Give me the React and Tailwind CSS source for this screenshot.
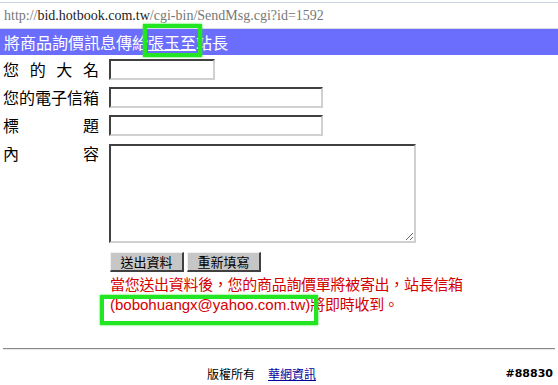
export default function App() {
  const cjk = "font-['Noto_Sans_CJK_TC','Noto_Sans_CJK_SC',sans-serif]";
  const inputCls =
    "block h-[21px] border-2 border-t-[#404040] border-l-[#404040] border-b-[#d0d0d0] border-r-[#d0d0d0] bg-white outline-none";
  const btnCls =
    "h-[20px] w-[74px] bg-[#c6c6c6] border-t border-l border-t-[#f0f0f0] border-l-[#f0f0f0] border-b-2 border-r-2 border-b-[#404040] border-r-[#404040] text-[13px] leading-[16px] text-black " +
    cjk;
  return (
    <div className={"relative w-[558px] h-[385px] bg-white overflow-hidden " + cjk}>
      {/* address bar */}
      <div className="pt-[2px]">
        <div className="h-[27px] border-t border-b border-t-[#c9d4e2] border-b-[#d6dde6] pl-[4px] font-['Liberation_Serif',serif] text-[14px] leading-[25px] text-[#777]">
          http://<span className="text-[#222]">bid.hotbook.com.tw</span>/cgi-bin/SendMsg.cgi?id=1592
        </div>
      </div>
      {/* title band */}
      <div className="h-[26px] bg-[#6b6efc] pl-[4px] text-[16px] leading-[26px] text-white">
        將商品詢價訊息傳給<span className="underline">張玉至</span>站長
      </div>

      {/* form */}
      <div className="mt-[4px] flex flex-col">
        <div className="flex items-center h-[21px]">
          <div className="ml-[3px] w-[97px] flex justify-between text-[16px] leading-[21px] text-black pr-[1px]">
            <span>您</span><span>的</span><span>大</span><span>名</span>
          </div>
          <input className={inputCls + " ml-[9px] w-[106px]"} />
        </div>
        <div className="flex items-center h-[21px] mt-[7px]">
          <div className="ml-[3px] w-[97px] text-[16px] leading-[21px] text-black">您的電子信箱</div>
          <input className={inputCls + " ml-[9px] w-[214px]"} />
        </div>
        <div className="flex items-center h-[21px] mt-[7px]">
          <div className="ml-[3px] w-[97px] flex justify-between text-[16px] leading-[21px] text-black pr-[1px]">
            <span>標</span><span>題</span>
          </div>
          <input className={inputCls + " ml-[9px] w-[214px]"} />
        </div>
        <div className="flex items-start mt-[8px]">
          <div className="ml-[3px] w-[97px] flex justify-between text-[16px] leading-[18px] text-black pr-[1px]">
            <span>內</span><span>容</span>
          </div>
          <textarea className="block ml-[9px] w-[307px] h-[99px] border-2 border-t-[#404040] border-l-[#404040] border-b-[#d0d0d0] border-r-[#d0d0d0] bg-white outline-none" />
        </div>

        <div className="ml-[110px] mt-[9px] flex gap-[3px]">
          <button className={btnCls}>送出資料</button>
          <button className={btnCls}>重新填寫</button>
        </div>

        <div className="ml-[110px] mt-[2px] text-[15px] leading-[20px] tracking-[-0.3px] text-[#d40000]">
          當您送出資料後，您的商品詢價單將被寄出，站長信箱
          <br />
          <span className="font-['Liberation_Sans',sans-serif] tracking-normal">(bobohuangx@yahoo.com.tw)</span>將即時收到。
        </div>
      </div>

      {/* footer */}
      <div className="mx-[3px] mt-[33px] border-t border-b border-t-[#8a8a8a] border-b-[#e8e8e8]" />
      <div className="mt-[16px] flex items-center h-[16px] text-[12px] leading-[16px]">
        <span className="ml-[207px] text-black">版權所有</span>
        <a className="ml-[13px] text-[#000099] underline">華網資訊</a>
        <span className="ml-auto mr-[5px] font-['DejaVu_Sans',sans-serif] font-bold text-[11px] text-black">#88830</span>
      </div>

      {/* annotation boxes */}
      <div className="absolute left-[143px] top-[24px] w-[59px] h-[33px] border-[4px] border-[#22e622] shadow-[0_0_2px_#22e622]" />
      <div className="absolute left-[100px] top-[295px] w-[218px] h-[30px] border-[4px] border-[#22e622] shadow-[0_0_2px_#22e622]" />
    </div>
  );
}
